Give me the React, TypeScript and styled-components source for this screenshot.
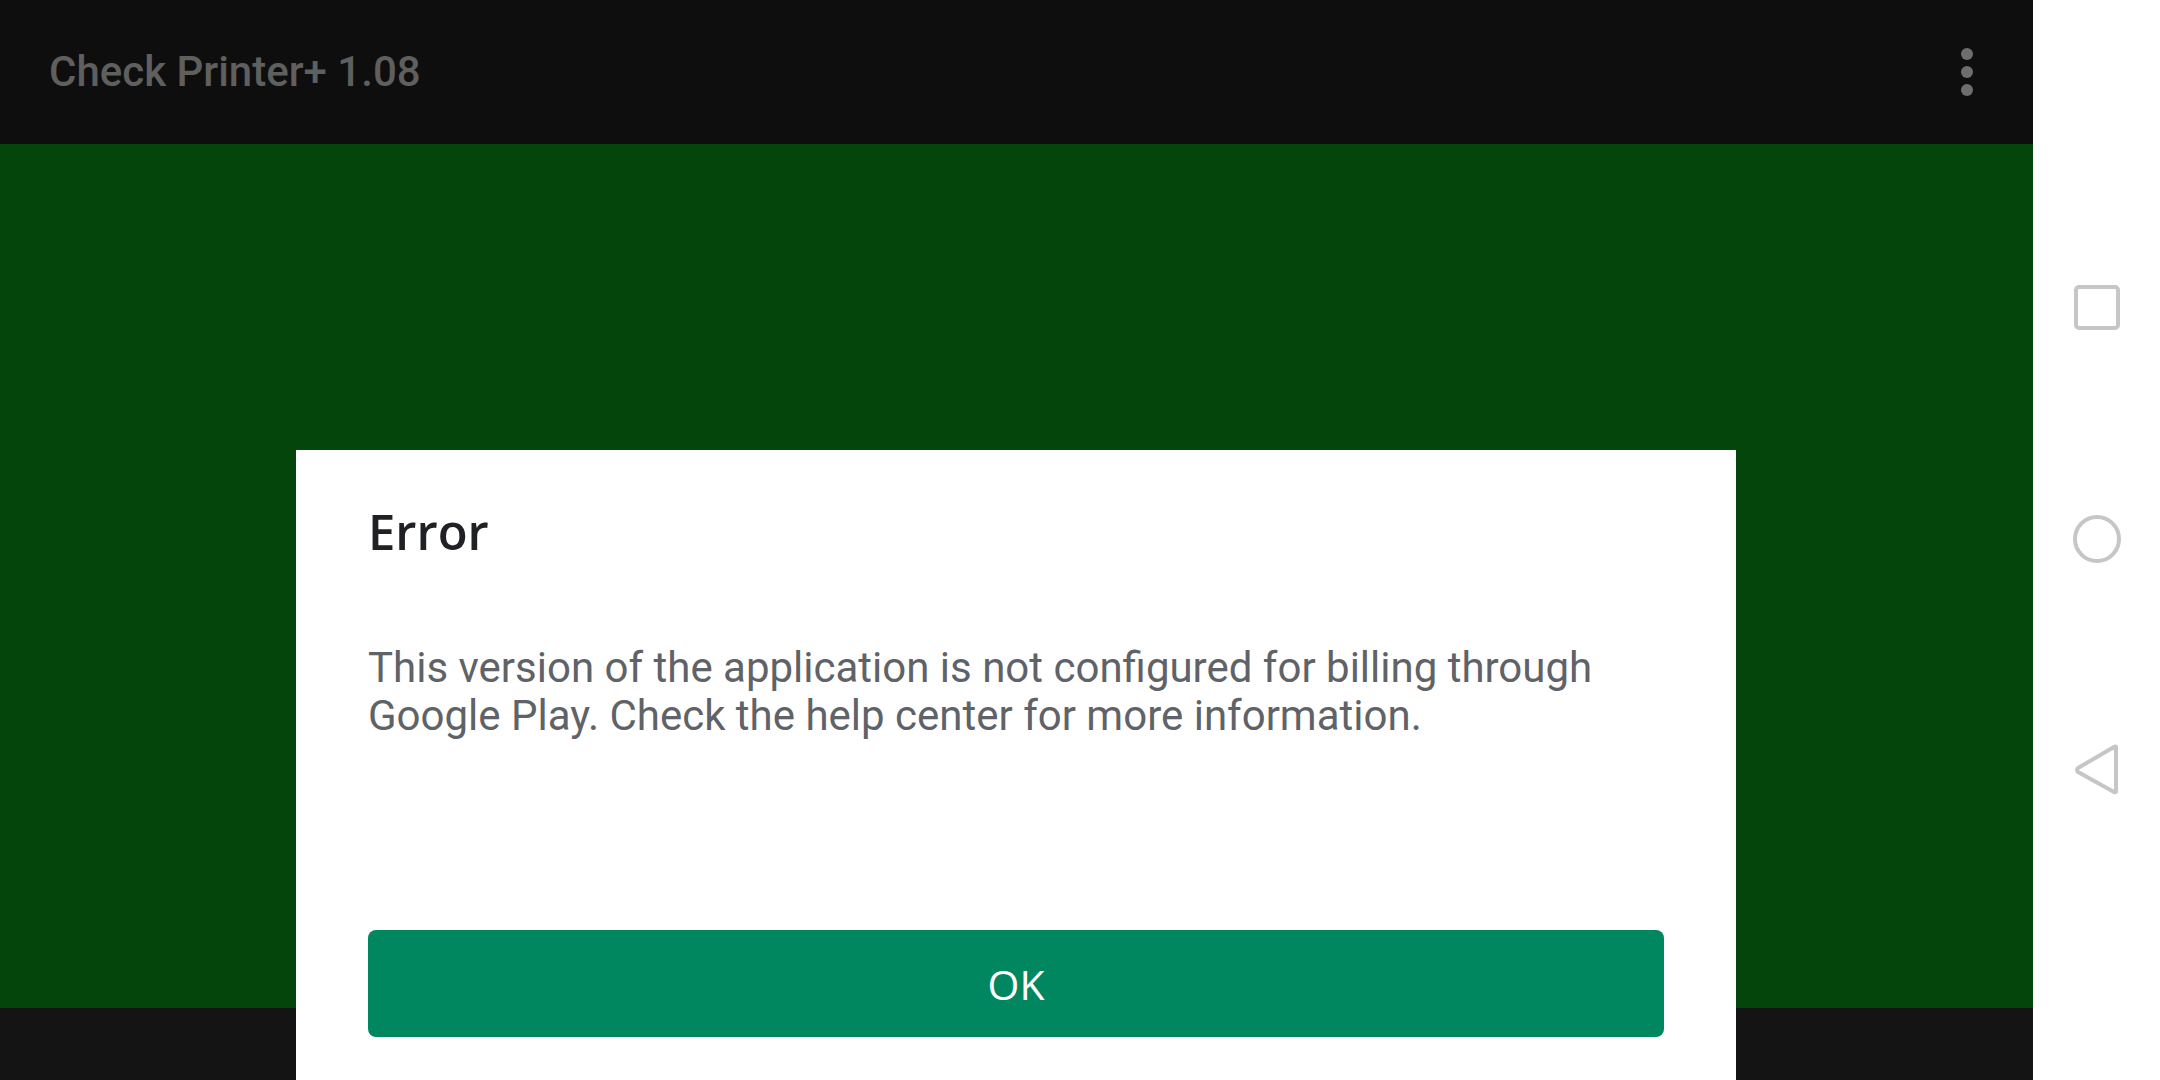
import React from 'react';
import styled, { createGlobalStyle } from 'styled-components';

const GlobalStyle = createGlobalStyle`
  html, body {
    margin: 0;
    padding: 0;
    width: 2160px;
    height: 1080px;
    overflow: hidden;
    background: #ffffff;
  }
`;

const Screen = styled.div`
  display: flex;
  width: 2160px;
  height: 1080px;
`;

const AppArea = styled.div`
  position: relative;
  flex: 1;
  display: flex;
  flex-direction: column;
  overflow: hidden;
`;

const TopBar = styled.header`
  height: 144px;
  flex-shrink: 0;
  background: #0e0e0e;
  display: flex;
  align-items: center;
  justify-content: space-between;
  padding: 0 60px 0 49px;
`;

const AppTitle = styled.h1`
  margin: 0;
  font-family: Roboto, "Liberation Sans", sans-serif;
  font-weight: 500;
  font-size: 42px;
  line-height: 44px;
  color: #5f5f5f;
`;

const MenuButton = styled.div`
  display: flex;
  flex-direction: column;
  gap: 6px;
`;

const Dot = styled.span`
  width: 12px;
  height: 12px;
  border-radius: 50%;
  background: #6e6e6e;
`;

const Content = styled.main`
  flex: 1;
  background: #03450b;
`;

const BottomBar = styled.div`
  height: 72px;
  flex-shrink: 0;
  background: #141414;
`;

const Dialog = styled.div`
  position: absolute;
  left: 296px;
  top: 450px;
  width: 1440px;
  height: 700px;
  box-sizing: border-box;
  background: #ffffff;
  padding: 56px 72px 0;
  display: flex;
  flex-direction: column;
`;

const DialogTitle = styled.h2`
  margin: 0;
  font-family: "Open Sans", sans-serif;
  font-weight: 600;
  font-size: 49px;
  line-height: 50px;
  color: #202124;
`;

const DialogText = styled.p`
  margin: 88px 0 0;
  font-family: Roboto, "Liberation Sans", sans-serif;
  font-size: 42px;
  line-height: 48px;
  color: #5f6368;
  max-width: 1240px;
`;

const OkButton = styled.button`
  margin-top: 190px;
  height: 107px;
  border: none;
  border-radius: 8px;
  background: #008760;
  color: #ffffff;
  font-family: "Open Sans", sans-serif;
  font-weight: 400;
  font-size: 41px;
  cursor: pointer;
`;

const NavBar = styled.nav`
  width: 127px;
  flex-shrink: 0;
  background: #ffffff;
  display: flex;
  flex-direction: column;
  align-items: center;
  padding-top: 283px;
  gap: 178px;
`;

const NavIcon = styled.svg`
  width: 52px;
  height: 52px;
  fill: none;
  stroke: #c6c6c6;
  stroke-width: 4;
  stroke-linejoin: round;
`;

const App: React.FC = () => {
  return (
    <Screen>
      <GlobalStyle />
      <AppArea>
        <TopBar>
          <AppTitle>Check Printer+ 1.08</AppTitle>
          <MenuButton>
            <Dot />
            <Dot />
            <Dot />
          </MenuButton>
        </TopBar>
        <Content />
        <BottomBar />
        <Dialog>
          <DialogTitle>Error</DialogTitle>
          <DialogText>
            This version of the application is not configured for billing through Google Play. Check the help center for more information.
          </DialogText>
          <OkButton>OK</OkButton>
        </Dialog>
      </AppArea>
      <NavBar>
        <NavIcon viewBox="0 0 52 52">
          <rect x="5" y="4" width="42" height="41" rx="3" />
        </NavIcon>
        <NavIcon viewBox="0 0 52 52">
          <circle cx="26" cy="26" r="22" />
        </NavIcon>
        <NavIcon viewBox="0 0 52 52">
          <path d="M45 4 L45 48 Q45 50 43 49 L7 29 Q5 27 7 25 L43 4 Q45 3 45 4 Z" />
        </NavIcon>
      </NavBar>
    </Screen>
  );
};

export default App;
